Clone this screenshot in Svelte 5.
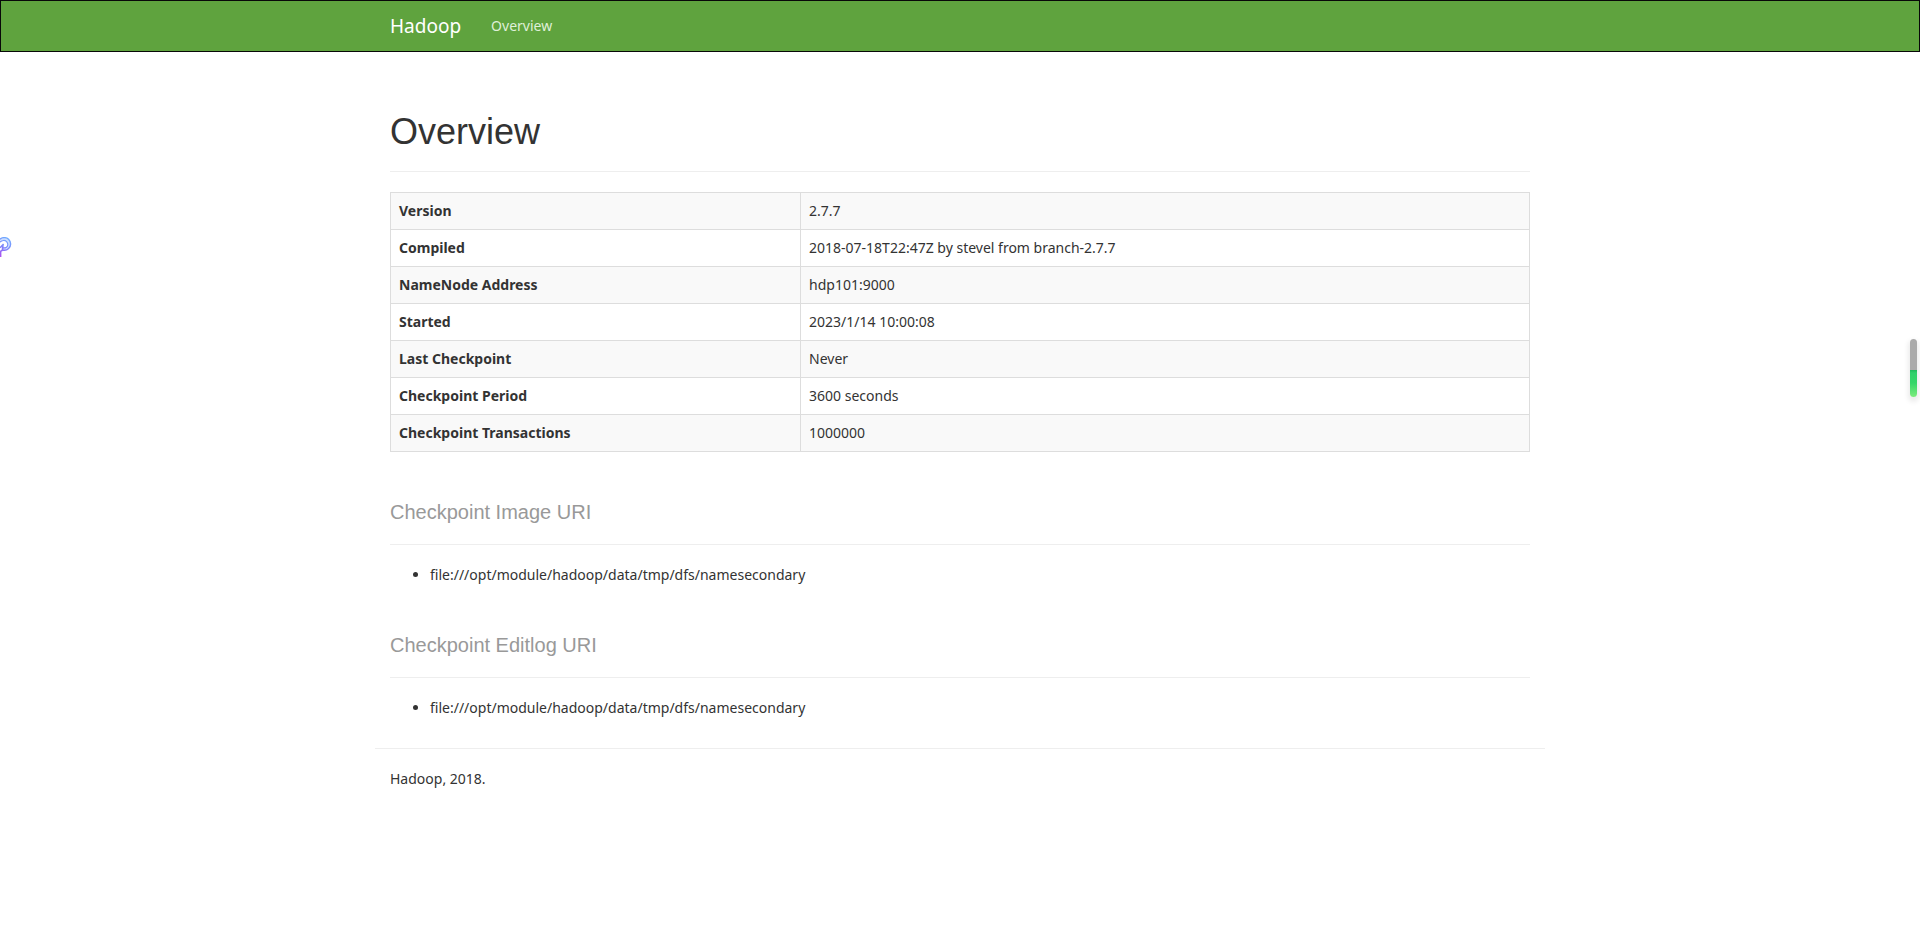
<script lang="ts">
  const overview = [
    { label: 'Version', value: '2.7.7' },
    { label: 'Compiled', value: '2018-07-18T22:47Z by stevel from branch-2.7.7' },
    { label: 'NameNode Address', value: 'hdp101:9000' },
    { label: 'Started', value: '2023/1/14 10:00:08' },
    { label: 'Last Checkpoint', value: 'Never' },
    { label: 'Checkpoint Period', value: '3600 seconds' },
    { label: 'Checkpoint Transactions', value: '1000000' },
  ];

  const sections = [
    { title: 'Checkpoint Image URI', dirs: ['file:///opt/module/hadoop/data/tmp/dfs/namesecondary'] },
    { title: 'Checkpoint Editlog URI', dirs: ['file:///opt/module/hadoop/data/tmp/dfs/namesecondary'] },
  ];
</script>

<header class="navbar">
  <nav class="container nav">
    <a class="brand" href="#top">Hadoop</a>
    <a class="nav-link" href="#overview">Overview</a>
  </nav>
</header>

<main class="container">
  <div class="page-header">
    <h1>Overview</h1>
  </div>

  <table>
    <tbody>
      {#each overview as row}
        <tr>
          <th scope="row">{row.label}</th>
          <td>{row.value}</td>
        </tr>
      {/each}
    </tbody>
  </table>

  {#each sections as section}
    <div class="page-header">
      <h2><small>{section.title}</small></h2>
    </div>
    <ul>
      {#each section.dirs as dir}
        <li>{dir}</li>
      {/each}
    </ul>
  {/each}
</main>

<footer class="container">
  <hr />
  <p>Hadoop, 2018.</p>
</footer>

<!-- floating widgets at the window edges -->
<svg class="side-icon" width="12" height="22" viewBox="0 0 12 22" aria-hidden="true">
  <defs>
    <linearGradient id="side" gradientUnits="userSpaceOnUse" x1="10" y1="1" x2="0" y2="20">
      <stop offset="0" stop-color="#6fb0ff" />
      <stop offset="0.5" stop-color="#7f86fb" />
      <stop offset="1" stop-color="#b04df0" />
    </linearGradient>
  </defs>
  <path d="M0 3.6C3 1 6.4 1.6 8 3.6C10 6 9.6 9 7.4 10.9C5.8 12 4 12.2 2.2 11.5" fill="none" stroke="#cfe0ff" stroke-width="2.6" />
  <path d="M0 2.2C2 0.2 6 0 8.6 2.2C11.4 5 11.2 9.2 8.6 11.6C6.6 13.4 4.2 13.6 2.2 12.8" fill="none" stroke="url(#side)" stroke-width="1.4" />
  <path d="M0 5.2C2 3 5 3 6.6 4.6C8.4 6.6 8 9 6.4 10.2C5 11.2 3.4 11 2.2 10.2" fill="none" stroke="url(#side)" stroke-width="1.2" />
  <path d="M0 10.8L3.6 7M3 7.6L2.4 13.2L0.6 14.4V20" fill="none" stroke="url(#side)" stroke-width="1.6" />
</svg>

<div class="meter" aria-hidden="true"></div>

<style>
  :global(body) {
    margin: 0;
    background: #fff;
    color: #333;
    font-family: 'Noto Sans', 'Open Sans', sans-serif;
    font-size: 14px;
    line-height: 20px;
  }
  .container {
    box-sizing: border-box;
    max-width: 1170px;
    margin: 0 auto;
    padding: 0 15px;
  }
  main {
    display: flow-root;
  }
  .navbar {
    margin-bottom: 20px;
    border: 1px solid #080808;
    background: #5fa33e;
  }
  .nav {
    display: flex;
    gap: 30px;
  }
  .nav a {
    padding: 15px 0;
    text-decoration: none;
  }
  .nav .brand {
    color: #fff;
    font-size: 19px;
  }
  .nav .nav-link {
    color: #dff0d8;
  }
  .page-header {
    margin: 40px 0 20px;
    padding-bottom: 19px;
    border-bottom: 1px solid #eee;
  }
  h1,
  h2 {
    margin: 0;
    font-family: 'Liberation Sans', Arial, sans-serif;
    font-weight: 500;
  }
  h1 {
    font-size: 36px;
    line-height: 40px;
  }
  h2 {
    font-size: 30px;
    line-height: 33px;
  }
  small {
    color: #999;
    font-size: 20px;
    font-weight: normal;
    line-height: 1;
  }
  table {
    width: 100%;
    border-collapse: collapse;
  }
  th,
  td {
    padding: 8px;
    border: 1px solid #ddd;
    text-align: left;
    vertical-align: top;
  }
  th {
    width: 36%;
  }
  tr:nth-child(odd) {
    background: #f9f9f9;
  }
  ul {
    margin: 0 0 10px;
    padding-left: 40px;
  }
  hr {
    margin: 20px -15px;
    border: 0;
    border-top: 1px solid #eee;
  }
  p {
    margin: 0;
  }
  .side-icon {
    position: fixed;
    top: 237px;
    left: 0;
  }
  .meter {
    position: fixed;
    top: 339px;
    right: 3px;
    width: 7px;
    height: 58px;
    border-radius: 4px;
    background: linear-gradient(#aaa 0 31px, #1fb95a 31px, #2fd06a 34px, #35d668 44px, #7dec7d 58px);
    box-shadow: 0 3px 5px 2px rgba(0, 0, 0, 0.08);
  }
</style>
